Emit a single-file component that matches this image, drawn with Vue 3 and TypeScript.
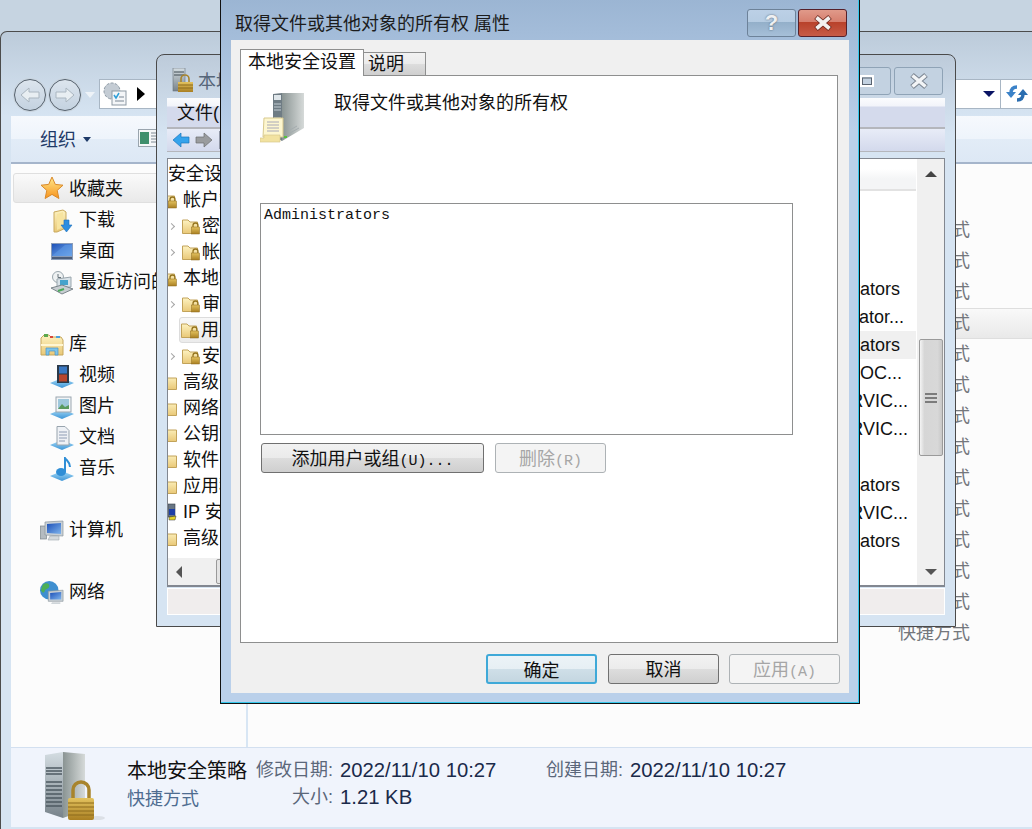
<script setup lang="ts">
interface NavItem {
  label: string
  icon: string
  child?: boolean
  active?: boolean
}

interface TreeItem {
  label: string
  icon?: string
  level: number
  chevron?: boolean
  active?: boolean
}

const navGroups: NavItem[][] = [
  [
    { label: '收藏夹', icon: 'i-star', active: true },
    { label: '下载', icon: 'i-download', child: true },
    { label: '桌面', icon: 'i-desktop', child: true },
    { label: '最近访问的位置', icon: 'i-recent', child: true }
  ],
  [
    { label: '库', icon: 'i-library' },
    { label: '视频', icon: 'i-video', child: true },
    { label: '图片', icon: 'i-picture', child: true },
    { label: '文档', icon: 'i-doc', child: true },
    { label: '音乐', icon: 'i-music', child: true }
  ],
  [{ label: '计算机', icon: 'i-computer' }],
  [{ label: '网络', icon: 'i-network' }]
]

const fileRows = Array.from({ length: 14 }, (_, i) => ({ id: i, selected: i === 3 }))

const treeItems: TreeItem[] = [
  { label: '安全设置', level: -1 },
  { label: '帐户策略', icon: 'i-lockfolder', level: 0 },
  { label: '密码策略', icon: 'i-lockfolder', level: 1, chevron: true },
  { label: '帐户锁定策略', icon: 'i-lockfolder', level: 1, chevron: true },
  { label: '本地策略', icon: 'i-lockfolder', level: 0 },
  { label: '审核策略', icon: 'i-lockfolder', level: 1, chevron: true },
  { label: '用户权限分配', icon: 'i-lockfolder', level: 1, active: true },
  { label: '安全选项', icon: 'i-lockfolder', level: 1, chevron: true },
  { label: '高级安全 Windows 防火墙', icon: 'i-folder', level: 0 },
  { label: '网络列表管理器策略', icon: 'i-folder', level: 0 },
  { label: '公钥策略', icon: 'i-folder', level: 0 },
  { label: '软件限制策略', icon: 'i-folder', level: 0 },
  { label: '应用程序控制策略', icon: 'i-folder', level: 0 },
  { label: 'IP 安全策略', icon: 'i-ipsec', level: 0 },
  { label: '高级审核策略配置', icon: 'i-folder', level: 0 }
]

// end = gap between the end of the text and the right edge of the list
const policyRows = [
  { text: '', end: 16 },
  { text: '', end: 16 },
  { text: '', end: 16 },
  { text: 'Administrators', end: 16 },
  { text: 'Administrator...', end: 12 },
  { text: 'Administrators', end: 16, selected: true },
  { text: 'LOCAL SERVICE,LOC...', end: 14 },
  { text: 'NT SERVICE,SERVIC...', end: 8 },
  { text: 'NT SERVICE,SERVIC...', end: 8 },
  { text: '', end: 16 },
  { text: 'Administrators', end: 16 },
  { text: 'NT SERVICE,SERVIC...', end: 8 },
  { text: 'Administrators', end: 16 }
]
</script>

<template>
  <div class="desktop">
    <svg class="defs" width="0" height="0" aria-hidden="true">
      <defs>
        <linearGradient id="g-star" x1="0" y1="0" x2="0" y2="1">
          <stop offset="0" stop-color="#ffe98a" />
          <stop offset="1" stop-color="#f7931e" />
        </linearGradient>
        <linearGradient id="g-folder" x1="0" y1="0" x2="0" y2="1">
          <stop offset="0" stop-color="#fdf2c0" />
          <stop offset="1" stop-color="#e9c877" />
        </linearGradient>
        <linearGradient id="g-screen" x1="0" y1="0" x2="1" y2="1">
          <stop offset="0" stop-color="#1c50b8" />
          <stop offset="1" stop-color="#7fb4ec" />
        </linearGradient>
        <linearGradient id="g-gold" x1="0" y1="0" x2="0" y2="1">
          <stop offset="0" stop-color="#e3c25e" />
          <stop offset="1" stop-color="#a97f22" />
        </linearGradient>
        <linearGradient id="g-side" x1="0" y1="0" x2="1" y2="0">
          <stop offset="0" stop-color="#8a9493" />
          <stop offset="1" stop-color="#d6dad9" />
        </linearGradient>
        <linearGradient id="g-front" x1="0" y1="0" x2="0" y2="1">
          <stop offset="0" stop-color="#d4dde2" />
          <stop offset="1" stop-color="#77828a" />
        </linearGradient>
        <linearGradient id="g-plate" x1="0" y1="0" x2="0" y2="1">
          <stop offset="0" stop-color="#a9dcf6" />
          <stop offset="1" stop-color="#3c95d8" />
        </linearGradient>
      </defs>
      <symbol id="i-star" viewBox="0 0 24 24">
        <polygon points="12,1 15.3,8.4 23,9.2 17.2,14.4 18.9,22.5 12,18.4 5.1,22.5 6.8,14.4 1,9.2 8.7,8.4" fill="url(#g-star)" stroke="#d98a2b" />
      </symbol>
      <symbol id="i-download" viewBox="0 0 24 24">
        <path d="M4 3 L13 1 L16 3 V19 L7 23 H4 Z" fill="url(#g-folder)" stroke="#c9a95e" />
        <path d="M7 5 L13 3 V18 L7 21 Z" fill="#f7e4a0" />
        <path d="M14 11 H19 V16 H22 L16.5 23 L11 16 H14 Z" fill="#2c8ee0" stroke="#1f6fb8" stroke-width=".6" />
      </symbol>
      <symbol id="i-desktop" viewBox="0 0 24 24">
        <rect x="1" y="3" width="22" height="17" fill="#8a9cb8" />
        <rect x="2" y="4" width="20" height="12" fill="url(#g-screen)" />
        <path d="M3 15 L15 5 H22 V16 H3 Z" fill="#5e9ae6" opacity=".6" />
        <rect x="2" y="17" width="20" height="2" fill="#4b5d7a" />
      </symbol>
      <symbol id="i-recent" viewBox="0 0 24 24">
        <circle cx="8" cy="6" r="5.5" fill="#eef1f2" stroke="#9aa6ad" />
        <path d="M8 3 V6.5 H11" fill="none" stroke="#66727a" />
        <path d="M7 8 L21 6 V16 L7 17 Z" fill="#d8e2e8" stroke="#9aa6ad" />
        <rect x="10" y="9" width="8" height="5" fill="#46a3cc" />
        <path d="M1 17 L12 14 L23 18 L12 23 Z" fill="#c8ced2" stroke="#7c868c" />
        <path d="M8 20 L14 18" stroke="#4aa85a" stroke-width="2" />
      </symbol>
      <symbol id="i-library" viewBox="0 0 24 24">
        <path d="M1 5 L4 2 H9 L11 4 H21 L23 7 V22 H1 Z" fill="url(#g-folder)" stroke="#c6a75c" />
        <rect x="4" y="1" width="4" height="3" fill="#5aa84e" />
        <rect x="10" y="3" width="3" height="2" fill="#d8483a" />
        <rect x="16" y="3" width="4" height="2" fill="#4aa0dc" />
        <path d="M1 12 H23" stroke="#fff6d2" stroke-width="2" />
        <path d="M6 22 V15 H18 V22 H15 V18 H9 V22 Z" fill="#7cc4ea" stroke="#4c94c4" stroke-width=".7" />
      </symbol>
      <symbol id="i-video" viewBox="0 0 24 24">
        <path d="M0 19 L12 14 L24 19 L12 24 Z" fill="url(#g-plate)" />
        <rect x="7" y="1" width="12" height="18" fill="#2b3948" />
        <rect x="9" y="2.5" width="8" height="7" fill="#3a78c2" />
        <rect x="9" y="10.5" width="8" height="7" fill="#b8452c" />
      </symbol>
      <symbol id="i-picture" viewBox="0 0 24 24">
        <path d="M0 19 L12 14 L24 19 L12 24 Z" fill="url(#g-plate)" />
        <rect x="6" y="2" width="15" height="15" fill="#f2f4f6" stroke="#9aa6b0" />
        <rect x="8" y="4" width="11" height="10" fill="#9fc8dc" />
        <path d="M8 14 L12 9 L15 12 L19 10 V14 Z" fill="#5a9a5e" />
      </symbol>
      <symbol id="i-doc" viewBox="0 0 24 24">
        <path d="M0 19 L12 14 L24 19 L12 24 Z" fill="url(#g-plate)" />
        <path d="M7 0.5 H15 L19 4.5 V19 H7 Z" fill="#eef1f5" stroke="#98a4ae" />
        <path d="M9 6 H17 M9 9 H17 M9 12 H17 M9 15 H15" stroke="#8e9cb4" />
      </symbol>
      <symbol id="i-music" viewBox="0 0 24 24">
        <path d="M0 19 L12 14 L24 19 L12 24 Z" fill="url(#g-plate)" />
        <ellipse cx="11" cy="15" rx="5" ry="4" fill="#2f8ed6" />
        <path d="M15 15 V1 C17 4 20 5 20 10" fill="none" stroke="#2f8ed6" stroke-width="2" />
      </symbol>
      <symbol id="i-computer" viewBox="0 0 24 24">
        <rect x="0.5" y="7" width="6" height="13" fill="#b4bbc0" stroke="#7d868c" stroke-width=".7" />
        <path d="M5 3 L23 2 V17 L5 16 Z" fill="#c8d0d6" stroke="#8b959c" stroke-width=".7" />
        <path d="M7 5 L21 4 V15 L7 14 Z" fill="url(#g-screen)" />
        <path d="M10 17 H19 V21 H8 Z" fill="#d4d9dc" stroke="#a0a8ae" stroke-width=".6" />
      </symbol>
      <symbol id="i-network" viewBox="0 0 26 26">
        <circle cx="10" cy="10" r="10" fill="#3f8fd0" />
        <path d="M3 4 C7 1 11 3 10 6 C9 9 6 8 5 11 C4 14 2 12 1 10 Z M12 12 C15 10 18 12 16 16 C14 19 11 17 12 12 Z" fill="#4caf56" />
        <path d="M9 11 L25 10 V22 L9 22 Z" fill="#c8d0d6" stroke="#8b959c" stroke-width=".7" />
        <path d="M11 13 L23 12 V20 L11 20 Z" fill="url(#g-screen)" />
        <path d="M13 23 H22 V25 H12 Z" fill="#cfd5d9" />
      </symbol>
      <symbol id="i-lockfolder" viewBox="0 0 18 18">
        <path d="M0.5 3 H6 L8 5 H15.5 V16.5 H0.5 Z" fill="url(#g-folder)" stroke="#c2a35a" />
        <rect x="9.5" y="10" width="8" height="7" fill="url(#g-gold)" stroke="#8c6a1c" stroke-width=".5" />
        <path d="M11 10 V8.5 A2.5 2.5 0 0 1 16 8.5 V10" fill="none" stroke="#96751f" stroke-width="1.3" />
      </symbol>
      <symbol id="i-folder" viewBox="0 0 18 18">
        <path d="M0.5 3 H6 L8 5 H17.5 V16.5 H0.5 Z" fill="url(#g-folder)" stroke="#c2a35a" />
      </symbol>
      <symbol id="i-ipsec" viewBox="0 0 18 18">
        <rect x="9" y="1" width="7" height="13" fill="#687684" stroke="#39424c" stroke-width=".6" />
        <rect x="10" y="6" width="6" height="6" fill="#1c3ea8" />
        <path d="M10 14 L17 13 L16 17 L10 17 Z" fill="#e2d22a" stroke="#333" stroke-width=".5" />
      </symbol>
    </svg>

    <!-- explorer behind everything -->
    <section class="explorer">
      <div class="ex-title"></div>
      <div class="ex-address">
        <div class="orbs">
          <span class="orb">
            <svg width="24" height="24" viewBox="0 0 24 24"><path d="M3 12 L11 5 V9 H21 V15 H11 V19 Z" fill="#e8eef2" stroke="#aab6c0" /></svg>
          </span>
          <span class="orb">
            <svg width="24" height="24" viewBox="0 0 24 24"><path d="M21 12 L13 5 V9 H3 V15 H13 V19 Z" fill="#e8eef2" stroke="#aab6c0" /></svg>
          </span>
          <i class="orb-caret"></i>
        </div>
        <div class="addr-field">
          <svg class="addr-icon" width="24" height="26" viewBox="0 0 24 26">
            <circle cx="9" cy="10" r="8" fill="#c4ccd4" stroke="#8d99a4" stroke-dasharray="3 1.5" />
            <rect x="9" y="10" width="14" height="14" fill="#f4f6f8" stroke="#8d99a4" />
            <path d="M11 14 L13 17 L16 12" fill="none" stroke="#2f9fd8" stroke-width="1.5" />
            <path d="M16 16 H21 M12 20 H21" stroke="#7a8794" />
          </svg>
          <i class="addr-sep"></i>
          <i class="addr-drop"></i>
          <span class="addr-refresh">
            <svg width="22" height="20" viewBox="0 0 22 20">
              <path d="M11 3 C7 3 5 5 5 9" fill="none" stroke="#3b82c8" stroke-width="3.4" />
              <path d="M0 8 H10 L5 14 Z" fill="#3b82c8" />
              <path d="M11 16 C15 16 17 14 17 10" fill="none" stroke="#2a6db0" stroke-width="3.4" />
              <path d="M12 11 H22 L17 5 Z" fill="#2a6db0" />
            </svg>
          </span>
        </div>
      </div>
      <div class="ex-frame">
        <div class="ex-toolbar">
          <span class="organize">组织</span>
          <i class="org-caret"></i>
          <svg class="view-icon" width="21" height="18" viewBox="0 0 21 18">
            <rect x=".5" y=".5" width="20" height="17" fill="#f5f7f8" stroke="#9aa5ae" />
            <rect x="2" y="3" width="9" height="12" fill="#3f8f6c" />
            <path d="M13 4 H19 M13 7 H19 M13 10 H19 M13 13 H19" stroke="#7f8a94" />
          </svg>
        </div>
        <div class="ex-main">
          <nav class="ex-nav">
            <div v-for="(group, g) in navGroups" :key="g" class="nav-group">
              <div
                v-for="item in group"
                :key="item.label"
                class="nav-row"
                :class="{ 'is-child': item.child, 'is-active': item.active }"
              >
                <svg class="nav-icon" width="24" height="24"><use :href="'#' + item.icon" /></svg>
                <span class="nav-label">{{ item.label }}</span>
              </div>
            </div>
          </nav>
          <div class="ex-files">
            <div v-for="row in fileRows" :key="row.id" class="file-row" :class="{ 'is-selected': row.selected }">
              快捷方式
            </div>
          </div>
        </div>
        <footer class="ex-details">
          <svg class="detail-icon" width="64" height="72" viewBox="0 0 64 72">
            <polygon points="2,3 20,0 20,66 2,60" fill="url(#g-front)" />
            <path d="M3 16 H19 M3 19 H19 M3 22 H19 M3 30 H19 M3 34 H19 M3 38 H19 M3 42 H19 M3 46 H19 M3 50 H19 M3 54 H19" stroke="#4e5a62" stroke-width="1.4" />
            <polygon points="20,0 42,2 42,58 20,66" fill="url(#g-side)" />
            <ellipse cx="54" cy="66" rx="8" ry="2" fill="#c8ccd0" opacity=".5" />
            <path d="M30 46 V38 A8 8 0 0 1 46 38 V46" fill="none" stroke="#a8842c" stroke-width="3.5" />
            <rect x="25" y="46" width="26" height="22" rx="2" fill="url(#g-gold)" />
            <path d="M25 51 H51 M25 55 H51 M25 59 H51 M25 63 H51" stroke="#8c6a1c" />
          </svg>
          <div class="detail-name">
            <div class="name-main">本地安全策略</div>
            <div class="name-sub">快捷方式</div>
          </div>
          <div class="detail-props">
            <span class="prop-label">修改日期:</span>
            <span class="prop-value">2022/11/10 10:27</span>
            <span class="prop-label">创建日期:</span>
            <span class="prop-value">2022/11/10 10:27</span>
            <span class="prop-label">大小:</span>
            <span class="prop-value">1.21 KB</span>
          </div>
        </footer>
      </div>
    </section>

    <!-- local security policy console -->
    <section class="console">
      <header class="con-title">
        <svg class="con-icon" width="22" height="25" viewBox="0 0 22 25">
          <rect x="1" y="0" width="12" height="23" fill="url(#g-front)" stroke="#6a747c" stroke-width=".6" />
          <path d="M2 4 H12 M2 7 H12" stroke="#3e4a52" />
          <path d="M9 14 V11 A4 4 0 0 1 17 11 V14" fill="none" stroke="#a8842c" stroke-width="1.6" />
          <rect x="6" y="14" width="15" height="10" fill="url(#g-gold)" />
          <path d="M6 17 H21 M6 20 H21" stroke="#8c6a1c" />
        </svg>
        <span class="con-name">本地安全策略</span>
        <span class="con-buttons">
          <span class="glass-btn">
            <svg width="14" height="12" viewBox="0 0 14 12"><rect x="1" y="1" width="12" height="10" fill="none" stroke="#fff" stroke-width="2" /><rect x="2.5" y="3" width="9" height="6.5" fill="none" stroke="#5a6470" /></svg>
          </span>
          <span class="glass-btn">
            <svg width="20" height="18" viewBox="0 0 20 18"><path d="M3 3 L17 15 M17 3 L3 15" stroke="#7a8490" stroke-width="5.5" /><path d="M3.5 3.5 L16.5 14.5 M16.5 3.5 L3.5 14.5" stroke="#f2f4f6" stroke-width="3.6" /></svg>
          </span>
        </span>
      </header>
      <div class="con-menu">文件(F)</div>
      <div class="con-tools">
        <svg width="18" height="16" viewBox="0 0 18 16"><path d="M1 8 L9 1 V5 H17 V11 H9 V15 Z" fill="#35a3ec" stroke="#1b76bc" stroke-width=".7" /></svg>
        <svg width="18" height="16" viewBox="0 0 18 16"><path d="M17 8 L9 1 V5 H1 V11 H9 V15 Z" fill="#9a9c9e" stroke="#6b6d6f" stroke-width=".7" /></svg>
        <i class="tool-sep"></i>
      </div>
      <div class="con-pane">
        <div class="con-tree">
          <div class="tree-rows">
            <div
              v-for="item in treeItems"
              :key="item.label"
              class="tree-row"
              :class="['lv' + item.level, { 'is-active': item.active }]"
            >
              <i v-if="item.level === 1" class="tree-chev" :class="{ 'is-hidden': !item.chevron }"></i>
              <svg v-if="item.icon" class="tree-icon" width="18" height="18"><use :href="'#' + item.icon" /></svg>
              <span class="tree-label">{{ item.label }}</span>
            </div>
          </div>
          <div class="tree-scroll">
            <span class="arrow-left"></span>
            <span class="tree-thumb"></span>
          </div>
        </div>
        <div class="con-list">
          <div class="list-head"></div>
          <div
            v-for="(row, i) in policyRows"
            :key="i"
            class="list-row"
            :class="{ 'is-selected': row.selected }"
            :style="{ paddingRight: row.end + 'px' }"
          >
            {{ row.text }}
          </div>
        </div>
        <div class="con-vscroll">
          <span class="arrow-up"></span>
          <span class="v-thumb"><i></i><i></i><i></i></span>
          <span class="arrow-down"></span>
        </div>
      </div>
      <div class="con-status"></div>
    </section>

    <!-- properties dialog -->
    <section class="dialog">
      <header class="dlg-title">
        <span class="dlg-name">取得文件或其他对象的所有权 属性</span>
        <span class="dlg-buttons">
          <span class="cap-btn cap-help">?</span>
          <span class="cap-btn cap-close">
            <svg width="22" height="18" viewBox="0 0 22 18"><path d="M4 3 L18 15 M18 3 L4 15" stroke="#6f2a20" stroke-width="5.5" /><path d="M4.5 3.5 L17.5 14.5 M17.5 3.5 L4.5 14.5" stroke="#f3f1ef" stroke-width="3.8" /></svg>
          </span>
        </span>
      </header>
      <div class="dlg-client">
        <div class="tabs">
          <span class="tab is-active">本地安全设置</span>
          <span class="tab">说明</span>
        </div>
        <div class="tab-pane">
          <div class="pane-head">
            <svg class="policy-icon" width="48" height="52" viewBox="0 0 48 52">
              <polygon points="13,2 22,1 22,49 13,44" fill="#6f7c84" />
              <rect x="14" y="3" width="7" height="5" fill="#dfe6ea" />
              <path d="M14 12 H21 M14 15 H21 M14 18 H21 M14 26 H21 M14 29 H21 M14 32 H21 M14 35 H21 M14 38 H21" stroke="#c2ccd2" />
              <polygon points="22,1 44,1 44,36 22,49" fill="url(#g-side)" />
              <path d="M37 34 L30 38 M39 36 L30 41" stroke="#a4acaf" />
              <rect x="24" y="44" width="3" height="2" fill="#55c23c" />
              <path d="M4 26 H23 V45 H3 Z" fill="#fdf6cf" stroke="#d8c98e" />
              <path d="M0 46 H4 V43 H20 V50 H0 Z" fill="#f2e2a0" stroke="#d8c98e" stroke-width=".7" />
              <path d="M7 30 H19 M7 33 H19 M7 36 H19 M7 39 H19" stroke="#a8a8b8" />
            </svg>
            <span class="pane-text">取得文件或其他对象的所有权</span>
          </div>
          <div class="user-list">Administrators</div>
          <div class="pane-actions">
            <button class="win-btn add-btn">添加用户或组<span class="latin">(U)...</span></button>
            <button class="win-btn remove-btn" disabled>删除<span class="latin">(R)</span></button>
          </div>
        </div>
        <div class="dlg-footer">
          <button class="win-btn is-default">确定</button>
          <button class="win-btn">取消</button>
          <button class="win-btn is-apply" disabled>应用<span class="latin">(A)</span></button>
        </div>
      </div>
    </section>
  </div>
</template>

<style>
html,
body {
  margin: 0;
  overflow: hidden;
}
</style>

<style scoped>
.desktop {
  position: relative;
  width: 1032px;
  height: 829px;
  overflow: hidden;
  background: #c6d4e1;
  font-family: "Liberation Sans", "Noto Sans CJK SC", sans-serif;
  font-size: 18px;
  color: #111;
}

.defs {
  position: absolute;
}

/* explorer */
.explorer {
  position: absolute;
  left: 0;
  top: 31px;
  width: 1060px;
  height: 798px;
  box-sizing: border-box;
  display: flex;
  flex-direction: column;
  border: 1px solid #4c4c4c;
  border-bottom: 0;
  border-radius: 7px 7px 0 0;
  background: linear-gradient(#bccbda, #d6e4f2 84px);
}

.ex-title {
  height: 46px;
  flex: none;
}

.ex-address {
  height: 38px;
  flex: none;
  display: flex;
  padding-left: 13px;
}

.orbs {
  width: 85px;
  height: 33px;
  display: flex;
  align-items: center;
  gap: 3px;
}

.orb {
  width: 30px;
  height: 30px;
  border: 1px solid #56616c;
  border-radius: 50%;
  display: flex;
  align-items: center;
  justify-content: center;
  background: linear-gradient(#dce5ee, #c4d2e0);
  box-shadow: 0 0 0 1px #c9d4de;
}

.orb-caret {
  margin-left: 1px;
  border: 5px solid transparent;
  border-top: 6px solid #eef3f8;
  margin-top: 6px;
}

.addr-field {
  flex: 1;
  height: 30px;
  margin-top: 1px;
  box-sizing: border-box;
  border: 1px solid #a8b6c4;
  background: #fff;
  display: flex;
  align-items: center;
  padding-left: 3px;
}

.addr-icon {
  flex: none;
}

.addr-sep {
  margin-left: 10px;
  border: 7px solid transparent;
  border-left: 8px solid #000;
  border-right: 0;
}

.addr-drop {
  margin-left: 838px;
  border: 6px solid transparent;
  border-top: 6px solid #0a1464;
  border-bottom: 0;
}

.addr-refresh {
  margin-left: 5px;
  padding-left: 5px;
  height: 28px;
  border-left: 1px solid #a8b6c4;
  display: flex;
  align-items: center;
}

.ex-frame {
  flex: 1;
  min-height: 0;
  margin-left: 10px;
  margin-bottom: 2px;
  display: flex;
  flex-direction: column;
  background: #fff;
}

.ex-toolbar {
  height: 48px;
  flex: none;
  box-sizing: border-box;
  display: flex;
  align-items: center;
  padding: 0 0 2px 29px;
  border-bottom: 2px solid #a5b5cb;
  background: linear-gradient(#f6f9fd, #eef4fb 50%, #e2ecf7 50%, #dde8f5);
}

.organize {
  color: #1e3a68;
}

.org-caret {
  margin-left: 7px;
  margin-top: 2px;
  border: 4px solid transparent;
  border-top: 5px solid #1e3a68;
  border-bottom: 0;
}

.view-icon {
  margin-left: 47px;
}

.ex-main {
  flex: 1;
  min-height: 0;
  display: flex;
  background: #fcfcfc;
}

.ex-nav {
  width: 237px;
  flex: none;
  box-sizing: border-box;
  padding-top: 9px;
  border-right: 2px solid #d8e6f4;
  overflow: hidden;
}

.nav-group {
  margin-bottom: 31px;
}

.nav-row {
  height: 31px;
  margin-left: 2px;
  box-sizing: border-box;
  padding-left: 27px;
  display: flex;
  align-items: center;
  gap: 5px;
  white-space: nowrap;
  line-height: 31px;
}

.nav-row.is-child {
  padding-left: 37px;
}

.nav-row.is-active {
  height: 30px;
  margin-bottom: 2px;
  padding-left: 26px;
  border: 1px solid #dfdfdf;
  border-radius: 3px;
  background: linear-gradient(#fafafa, #e9e9e9);
}

.nav-row.is-active span {
  padding-top: 2px;
}

.nav-icon {
  flex: none;
}

/* the console window covers everything right of this width */
.nav-label {
  max-width: 80px;
  overflow: hidden;
}

.ex-files {
  flex: 1;
  padding-top: 51px;
  min-width: 0;
}

.file-row {
  height: 31px;
  box-sizing: border-box;
  line-height: 31px;
  text-align: right;
  padding-right: 89px;
  color: #74777c;
}

.file-row.is-selected {
  border-top: 1px solid #dedede;
  border-bottom: 1px solid #dedede;
  line-height: 29px;
  background: linear-gradient(#f9f9f9, #e9e9e9);
}

.ex-details {
  height: 80px;
  flex: none;
  box-sizing: border-box;
  display: flex;
  border-top: 1px solid #d3e0f0;
  background: #f0f4fc;
}

.detail-icon {
  margin: 4px 0 0 32px;
  flex: none;
}

.detail-name {
  margin-left: 20px;
  width: 129px;
  flex: none;
  padding-top: 9px;
}

.name-main,
.name-sub {
  height: 28px;
  line-height: 28px;
}

.name-main {
  font-size: 20px;
  white-space: nowrap;
}

.name-sub {
  color: #4e6c90;
}

.detail-props {
  padding-top: 9px;
  display: grid;
  grid-template-columns: 77px 213px 77px auto;
  grid-auto-rows: 27px;
  line-height: 27px;
  align-content: start;
}

.prop-label {
  text-align: right;
  color: #5b677a;
  white-space: nowrap;
}

.prop-value {
  margin-left: 7px;
  font-size: 20.3px;
  color: #1b2a4a;
  white-space: nowrap;
}

/* console */
.console {
  position: absolute;
  left: 156px;
  top: 54px;
  width: 800px;
  height: 573px;
  box-sizing: border-box;
  padding: 0 10px 11px;
  display: flex;
  flex-direction: column;
  border: 1px solid #4a4a4a;
  border-radius: 8px 8px 0 0;
  background: linear-gradient(#bdcbda, #d6e4f2 80px);
}

.con-title {
  height: 43px;
  flex: none;
  display: flex;
  align-items: flex-start;
  padding-top: 12px;
  box-sizing: border-box;
}

.con-icon {
  margin: 1px 0 0 5px;
  flex: none;
}

.con-name {
  margin-left: 4px;
  margin-top: 3px;
  line-height: 24px;
  color: #566679;
}

.con-buttons {
  margin-left: auto;
  margin-right: 2px;
  display: flex;
  gap: 3px;
}

.glass-btn {
  width: 49px;
  height: 28px;
  box-sizing: border-box;
  border: 1px solid #8fa3b6;
  border-radius: 3px;
  display: flex;
  align-items: center;
  justify-content: center;
  background: #c3d2e1;
}

.con-menu {
  height: 31px;
  flex: none;
  box-sizing: border-box;
  padding-left: 10px;
  line-height: 30px;
  border-bottom: 2px solid #b4b6bc;
  background: linear-gradient(#fbfcfe, #f2f4fa 8px, #d4daec 9px);
}

.con-tools {
  height: 23px;
  flex: none;
  box-sizing: border-box;
  display: flex;
  align-items: center;
  gap: 5px;
  padding-left: 5px;
  border-bottom: 1px solid #b4b6bc;
  background: linear-gradient(#e8ecf7, #d3d9ec);
}

.tool-sep {
  margin-left: 1px;
  width: 1px;
  height: 18px;
  background: #8f95a5;
}

.con-pane {
  margin-top: 6px;
  height: 429px;
  flex: none;
  box-sizing: border-box;
  display: flex;
  border: 1px solid #828790;
  border-bottom-width: 2px;
  background: #fff;
}

.con-tree {
  width: 400px;
  flex: none;
  display: flex;
  flex-direction: column;
  overflow: hidden;
}

.tree-rows {
  flex: 1;
  padding-top: 2px;
}

.tree-row {
  height: 26px;
  display: flex;
  align-items: center;
  white-space: nowrap;
  line-height: 26px;
}

.tree-row.lv0 .tree-icon {
  margin-left: -9px;
  margin-right: 6px;
}

.tree-chev {
  flex: none;
  width: 4px;
  height: 4px;
  margin: 0 8px 0 0;
  border-top: 1px solid #a6a6a6;
  border-right: 1px solid #a6a6a6;
  transform: rotate(45deg);
}

.tree-chev.is-hidden {
  visibility: hidden;
}

.tree-row.lv1 {
  padding-left: 1px;
}

.tree-row.lv1 .tree-icon {
  margin-right: 2px;
}

.tree-row.is-active {
  margin-left: 11px;
  padding-left: 0;
  box-sizing: border-box;
  border: 1px solid #dcdcdc;
  border-radius: 3px;
  background: linear-gradient(#f8f8f8, #ececec);
}

.tree-row.is-active .tree-chev {
  display: none;
}

.tree-row.is-active .tree-icon {
  margin-left: 1px;
}

.tree-scroll {
  height: 27px;
  flex: none;
  display: flex;
  align-items: center;
  background: #f0f0f0;
}

.arrow-left {
  margin-left: 8px;
  border: 6px solid transparent;
  border-right: 6px solid #555;
  border-left: 0;
}

.tree-thumb {
  margin-left: 34px;
  width: 120px;
  height: 25px;
  box-sizing: border-box;
  border: 1px solid #9a9a9a;
  border-radius: 2px;
  background: #e4e4e4;
}

.con-list {
  flex: 1;
  min-width: 0;
  padding-top: 10px;
}

.list-head {
  height: 22px;
  box-sizing: border-box;
  border-bottom: 2px solid #e2e2e2;
  background: linear-gradient(#fff, #f4f5f6 50%);
}

.list-row {
  height: 28px;
  line-height: 28px;
  text-align: right;
  white-space: nowrap;
}

.list-row.is-selected {
  background: #f0f0f0;
}

.con-vscroll {
  width: 27px;
  flex: none;
  margin-left: 1px;
  display: flex;
  flex-direction: column;
  align-items: center;
  background: #f0f0f0;
}

.arrow-up {
  margin-top: 12px;
  border: 6px solid transparent;
  border-bottom: 6px solid #444;
  border-top: 0;
}

.v-thumb {
  margin-top: 162px;
  width: 24px;
  height: 117px;
  box-sizing: border-box;
  border: 1px solid #9a9a9a;
  border-radius: 2px;
  display: flex;
  flex-direction: column;
  align-items: center;
  justify-content: center;
  gap: 2px;
  background: linear-gradient(90deg, #f4f4f4, #d6d6d6 20%, #d8d8d8 80%, #c8c8c8);
}

.v-thumb i {
  width: 12px;
  height: 2px;
  background: #7c7c7c;
}

.arrow-down {
  margin-top: 113px;
  border: 6px solid transparent;
  border-top: 6px solid #555;
  border-bottom: 0;
}

.con-status {
  flex: 1;
  margin-top: 1px;
  box-sizing: border-box;
  border: 1px solid #fff;
  background: #f0eded;
}

/* dialog */
.dialog {
  position: absolute;
  left: 220px;
  top: -1px;
  width: 640px;
  height: 705px;
  box-sizing: border-box;
  padding: 0 10px 10px;
  display: flex;
  flex-direction: column;
  border: 1px solid #111;
  border-top: 0;
  box-shadow: inset -1px -1px 0 #35c8ec;
  background: linear-gradient(#9bb5d3 0, #bad0ea 131px);
}

.dlg-title {
  height: 41px;
  flex: none;
  display: flex;
  align-items: flex-start;
  box-sizing: border-box;
  padding: 10px 2px 0 4px;
}

.dlg-name {
  line-height: 30px;
  white-space: nowrap;
  color: #1c1c1c;
}

.dlg-buttons {
  margin-left: auto;
  display: flex;
  gap: 2px;
}

.cap-btn {
  width: 49px;
  height: 28px;
  box-sizing: border-box;
  border-radius: 3px;
  display: flex;
  align-items: center;
  justify-content: center;
}

.cap-help {
  border: 1px solid #6d8299;
  font-family: "Liberation Sans", sans-serif;
  font-size: 22px;
  font-weight: 700;
  color: #eef0f2;
  text-shadow: 0 0 2px #4c5a68;
  background: linear-gradient(#bcd0e6, #b6cce2 45%, #93afc9 46%, #a6bfd8);
}

.cap-close {
  border: 1px solid #55202a;
  background: linear-gradient(#e09a8a, #d67f6e 45%, #b8412a 46%, #c75b46);
}

.dlg-client {
  flex: 1;
  min-height: 0;
  box-sizing: border-box;
  padding: 9px 11px 9px 9px;
  display: flex;
  flex-direction: column;
  background: #f0f0f0;
}

.tabs {
  height: 27px;
  flex: none;
  display: flex;
  align-items: flex-end;
  position: relative;
  z-index: 1;
  margin-bottom: -1px;
}

.tab {
  height: 24px;
  padding: 0 21px 0 4px;
  box-sizing: border-box;
  width: 62px;
  line-height: 23px;
  white-space: nowrap;
  border: 1px solid #8e8f8f;
  border-left: 0;
  border-bottom: 1px solid #8e8f8f;
  background: linear-gradient(#f2f2f2, #ebebeb 50%, #dddddd 50%, #cfcfcf);
}

.tab.is-active {
  width: 124px;
  height: 27px;
  padding: 0 7px;
  line-height: 25px;
  border-left: 1px solid #8e8f8f;
  border-bottom: 0;
  background: #fff;
}

.tab-pane {
  flex: 1;
  min-height: 0;
  box-sizing: border-box;
  padding: 16px 0 0 19px;
  border: 1px solid #8e8f8f;
  background: #fff;
}

.pane-head {
  height: 111px;
  display: flex;
  align-items: flex-start;
}

.policy-icon {
  flex: none;
}

.pane-text {
  margin-left: 26px;
  line-height: 22px;
}

.user-list {
  width: 533px;
  height: 232px;
  box-sizing: border-box;
  padding: 0 3px;
  border: 1px solid #8e8f8f;
  font-family: "Liberation Mono", monospace;
  font-size: 15px;
  line-height: 23px;
}

.pane-actions {
  margin-top: 8px;
  margin-left: 1px;
  display: flex;
  gap: 11px;
}

.win-btn {
  width: 111px;
  height: 30px;
  box-sizing: border-box;
  padding: 0;
  border: 1px solid #707070;
  border-radius: 3px;
  font-family: "Noto Sans CJK SC", sans-serif;
  font-size: 18px;
  line-height: 26px;
  color: #111;
  white-space: nowrap;
  background: linear-gradient(#f2f2f2, #ebebeb 50%, #dddddd 50%, #cfcfcf);
}

.win-btn:disabled {
  border-color: #adb2b5;
  color: #a6a6a6;
  background: #f4f4f4;
}

.win-btn.is-default {
  border: 2px solid #3fa9d8;
  background: linear-gradient(#ecf3f7, #e6eff4 50%, #cfdfe8 50%, #c4d6e0);
}

.latin {
  font-family: "Liberation Mono", monospace;
  font-size: 15px;
}

.add-btn {
  width: 223px;
}

.dlg-footer {
  flex: none;
  margin: 11px -2px 0 0;
  display: flex;
  justify-content: flex-end;
  gap: 11px;
}

.dlg-footer .win-btn {
  padding-bottom: 2px;
}

.is-apply {
  margin-left: -1px;
}
</style>
